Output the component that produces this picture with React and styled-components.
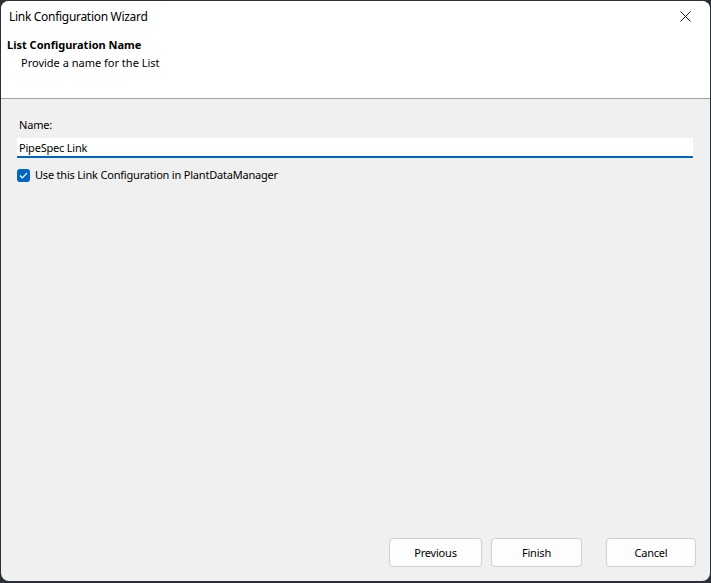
import React from 'react';
import styled, { createGlobalStyle } from 'styled-components';

const GlobalStyle = createGlobalStyle`
  html, body {
    margin: 0;
    padding: 0;
    background: #2b2f37;
  }
  body {
    font-family: 'Noto Sans', 'Open Sans', Arial, sans-serif;
    color: #000000;
    letter-spacing: -0.2px;
  }
  #root {
    width: 711px;
    height: 583px;
    overflow: hidden;
  }
`;

const Window = styled.div`
  margin: 1px 0 0 1px;
  width: 709px;
  height: 580px;
  background: #f0f0f0;
  border-radius: 8px;
  overflow: hidden;
  display: flex;
  flex-direction: column;
`;

const TitleBar = styled.div`
  height: 30px;
  background: #ffffff;
  display: flex;
  align-items: center;
  justify-content: space-between;
  padding: 0 0 0 8px;
  font-size: 12px;
  letter-spacing: -0.3px;
`;

const CloseButton = styled.div`
  width: 46px;
  height: 30px;
  display: flex;
  align-items: center;
  justify-content: center;
  padding-right: 2px;
`;

const Header = styled.div`
  background: #ffffff;
  height: 68px;
  border-bottom: 1px solid #a0a0a0;
  padding: 6px 0 0 6px;
  box-sizing: border-box;
`;

const HeaderTitle = styled.div`
  font-size: 11px;
  font-weight: 700;
  line-height: 16px;
  letter-spacing: 0;
`;

const HeaderSubtitle = styled.div`
  font-size: 11px;
  line-height: 16px;
  letter-spacing: 0;
  margin: 2px 0 0 14px;
`;

const Body = styled.div`
  flex: 1;
  display: flex;
  flex-direction: column;
  padding: 18px 17px 0 16px;
`;

const Label = styled.div`
  font-size: 11px;
  line-height: 16px;
  margin-left: 2px;
`;

const TextInput = styled.div`
  margin-top: 5px;
  height: 20px;
  background: #ffffff;
  border-bottom: 2px solid #0067c0;
  box-sizing: border-box;
  padding: 1px 2px 0;
  font-size: 11px;
  line-height: 17px;
`;

const CheckRow = styled.div`
  display: flex;
  align-items: center;
  gap: 5px;
  margin-top: 9px;
  font-size: 11px;
  line-height: 16px;
`;

const CheckBox = styled.div`
  width: 13px;
  height: 13px;
  border-radius: 3px;
  background: #0067c0;
  display: flex;
  align-items: center;
  justify-content: center;
`;

const Footer = styled.div`
  display: flex;
  padding: 0 0 14px 388px;
  gap: 9px;
`;

const Button = styled.div`
  width: ${p => p.$width || 91}px;
  height: 29px;
  box-sizing: border-box;
  border: 1px solid #d0d0d0;
  border-radius: 4px;
  background: #fdfdfd;
  display: flex;
  align-items: center;
  justify-content: center;
  font-size: 11px;
  margin-left: ${p => p.$gap || 0}px;
`;

export default function App() {
  return (
    <>
      <GlobalStyle />
      <Window>
        <TitleBar>
          <span>Link Configuration Wizard</span>
          <CloseButton>
            <svg width="11" height="11" viewBox="0 0 11 11">
              <path d="M0.5 0.5 L10.5 10.5 M10.5 0.5 L0.5 10.5" stroke="#1a1a1a" strokeWidth="1" />
            </svg>
          </CloseButton>
        </TitleBar>
        <Header>
          <HeaderTitle>List Configuration Name</HeaderTitle>
          <HeaderSubtitle>Provide a name for the List</HeaderSubtitle>
        </Header>
        <Body>
          <Label>Name:</Label>
          <TextInput>PipeSpec Link</TextInput>
          <CheckRow>
            <CheckBox>
              <svg width="9" height="7" viewBox="0 0 9 7">
                <path d="M1 3.5 L3.3 5.8 L8 1" fill="none" stroke="#ffffff" strokeWidth="1.2" />
              </svg>
            </CheckBox>
            <span>Use this Link Configuration in PlantDataManager</span>
          </CheckRow>
        </Body>
        <Footer>
          <Button $width={93}>Previous</Button>
          <Button>Finish</Button>
          <Button $gap={15} $width={90}>Cancel</Button>
        </Footer>
      </Window>
    </>
  );
}
